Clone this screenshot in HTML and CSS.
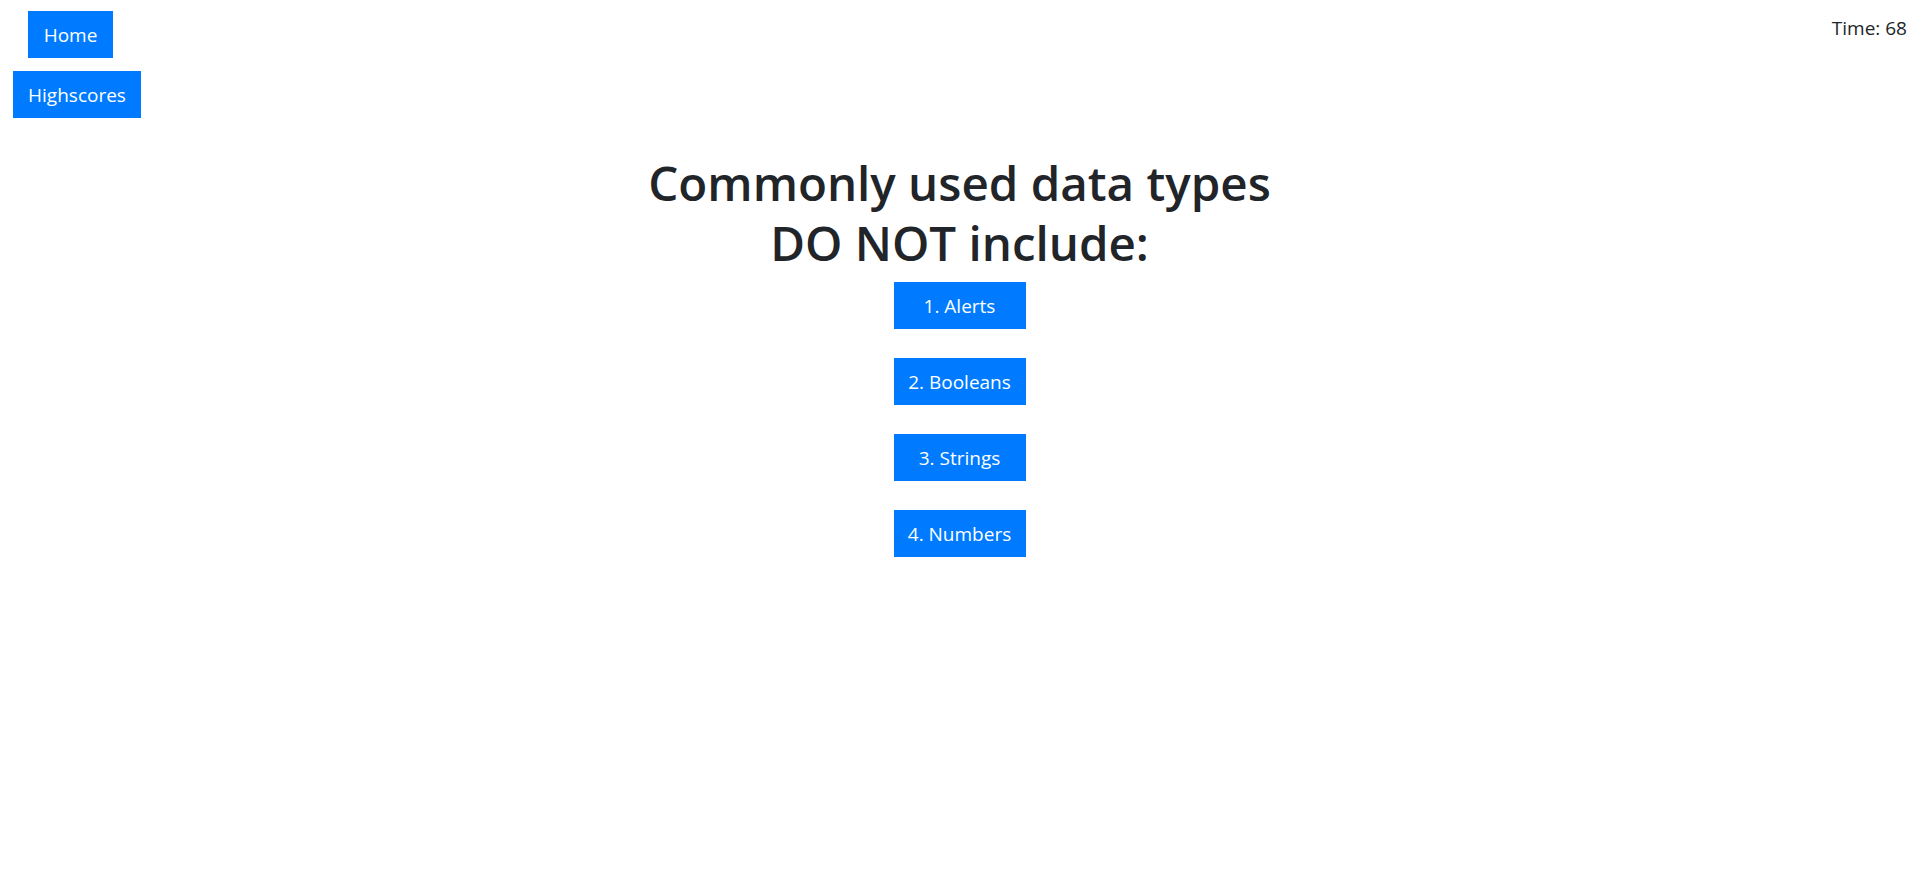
FILE: index.html
```html
<!DOCTYPE html>
<html lang="en">
<head>
<meta charset="utf-8">
<title>Code Quiz</title>
<link rel="stylesheet" href="styles.css">
</head>
<body>
<header class="topbar">
  <nav class="nav">
    <a class="btn btn-home" href="#">Home</a>
    <a class="btn btn-scores" href="#">Highscores</a>
  </nav>
  <div class="timer">Time: 68</div>
</header>
<main class="quiz">
  <h1 class="question"><span class="line">Commonly used data types</span><span class="line">DO NOT include:</span></h1>
  <div class="answers">
    <button class="btn answer">1. Alerts</button>
    <button class="btn answer">2. Booleans</button>
    <button class="btn answer">3. Strings</button>
    <button class="btn answer">4. Numbers</button>
  </div>
</main>
</body>
</html>
```
FILE: styles.css
```css
* { box-sizing: border-box; }
body {
  margin: 0;
  font-family: "Segoe UI", "Open Sans", "Noto Sans", sans-serif;
  color: #212529;
  background: #fff;
}
.topbar {
  display: flex;
  justify-content: space-between;
  align-items: flex-start;
}
.nav {
  display: flex;
  flex-direction: column;
  align-items: flex-start;
  gap: 13px;
  padding: 11px 0 0 13px;
}
.btn {
  display: inline-block;
  background: #007bff;
  color: #fff;
  border: 1px solid #007bff;
  border-radius: 0;
  font-family: inherit;
  font-size: 19px;
  line-height: 29px;
  padding: 9px 0 7px;
  text-decoration: none;
  text-align: center;
  cursor: pointer;
}
.btn-home { margin-left: 15px; width: 85px; }
.btn-scores { width: 128px; }
.timer {
  font-size: 19px;
  line-height: 30px;
  padding: 13px 12px 0 0;
}
.quiz {
  display: flex;
  flex-direction: column;
  align-items: center;
}
.question {
  margin: 35px 0 9px;
  font-size: 47.5px;
  font-weight: 600;
  line-height: 60px;
  text-align: center;
}
.line { display: block; }
.answers {
  display: flex;
  flex-direction: column;
  align-items: center;
  gap: 29px;
}
.answer { width: 132px; }
```
